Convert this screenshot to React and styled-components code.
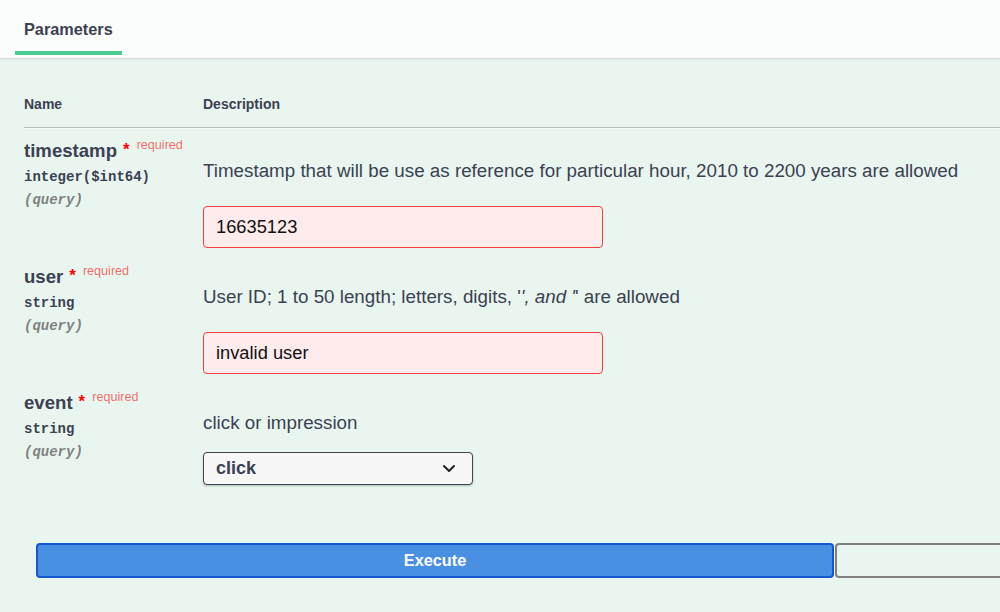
import React from 'react';
import styled, { createGlobalStyle } from 'styled-components';

const Global = createGlobalStyle`
  html, body {
    margin: 0;
    padding: 0;
    background: #e9f6f0;
  }
  body {
    font-family: "Liberation Sans", Arial, sans-serif;
    color: #3b4151;
  }
`;

const params = [
  {
    name: 'timestamp',
    type: 'integer($int64)',
    desc: 'Timestamp that will be use as reference for particular hour, 2010 to 2200 years are allowed',
    value: '16635123',
  },
  {
    name: 'user',
    type: 'string',
    desc: (
      <>
        User ID; 1 to 50 length; letters, digits, '<em>', and '</em>' are allowed
      </>
    ),
    value: 'invalid user',
  },
  {
    name: 'event',
    type: 'string',
    desc: 'click or impression',
    select: 'click',
  },
];

export default function App() {
  return (
    <Page>
      <Global />
      <Header>
        <Tab>Parameters</Tab>
      </Header>
      <Table>
        <HeadRow>
          <HeadCell>Name</HeadCell>
          <HeadCell>Description</HeadCell>
        </HeadRow>
        {params.map((p) => (
          <Row key={p.name}>
            <NameCol>
              <ParamName>
                {p.name}
                <Star>*</Star>
                <Required>required</Required>
              </ParamName>
              <ParamType>{p.type}</ParamType>
              <ParamIn>(query)</ParamIn>
            </NameCol>
            <DescCol>
              <Desc>{p.desc}</Desc>
              {p.select ? (
                <Select>
                  <span>{p.select}</span>
                  <svg width="14" height="9" viewBox="0 0 14 9">
                    <path d="M2 2l5 5 5-5" fill="none" stroke="#222" strokeWidth="2" strokeLinecap="round" strokeLinejoin="round" />
                  </svg>
                </Select>
              ) : (
                <Input>{p.value}</Input>
              )}
            </DescCol>
          </Row>
        ))}
      </Table>
      <ButtonGroup>
        <ExecuteButton>Execute</ExecuteButton>
        <ClearButton />
      </ButtonGroup>
    </Page>
  );
}

const Page = styled.div`
  width: 1000px;
  height: 612px;
  overflow: hidden;
  background: #e9f6f0;
`;

const Header = styled.div`
  height: 58px;
  background: #fbfdfc;
  box-shadow: 0 1px 2px rgba(0, 0, 0, 0.12);
  display: flex;
  align-items: flex-start;
  padding-left: 15px;
  position: relative;
`;

const Tab = styled.div`
  display: flex;
  align-items: center;
  padding: 8px 9px 0;
  width: 107px;
  box-sizing: border-box;
  font-size: 16.3px;
  font-weight: 700;
  color: #3b4151;
  border-bottom: 4px solid #49cc90;
  height: 55px;
`;

const Table = styled.div`
  padding-left: 24px;
  margin-top: 38px;
`;

const HeadRow = styled.div`
  display: grid;
  grid-template-columns: 179px 1fr;
  padding-bottom: 14px;
  border-bottom: 1px solid #aebdb6;
  box-shadow: 0 1px 0 #f3fbf7;
`;

const HeadCell = styled.div`
  font-size: 14px;
  font-weight: 700;
  line-height: 17px;
`;

const Row = styled.div`
  display: grid;
  grid-template-columns: 179px 1fr;
  height: 126px;
  padding-top: 12px;
  box-sizing: border-box;
`;

const NameCol = styled.div`
  display: flex;
  flex-direction: column;
`;

const ParamName = styled.div`
  font-size: 18.6px;
  font-weight: 700;
  line-height: 22px;
  white-space: nowrap;
`;

const Star = styled.span`
  color: #f00;
  font-size: 17px;
  margin-left: 6px;
  position: relative;
  top: -2px;
`;

const Required = styled.span`
  color: rgba(255, 0, 0, 0.6);
  font-size: 12.6px;
  font-weight: 400;
  position: relative;
  top: -8px;
  margin-left: 7px;
`;

const ParamType = styled.div`
  font-family: "Liberation Mono", "Courier New", monospace;
  font-size: 14px;
  font-weight: 700;
  line-height: 18px;
  margin-top: 4px;
`;

const ParamIn = styled.div`
  font-family: "Liberation Mono", "Courier New", monospace;
  font-size: 14px;
  font-weight: 700;
  font-style: italic;
  color: #808080;
  line-height: 18px;
  margin-top: 5px;
`;

const DescCol = styled.div`
  display: flex;
  flex-direction: column;
  align-items: flex-start;
  padding-top: 20px;
`;

const Desc = styled.div`
  font-size: 18.8px;
  line-height: 22px;
  white-space: nowrap;
`;

const Input = styled.div`
  margin-top: 24px;
  width: 400px;
  height: 42px;
  box-sizing: border-box;
  border: 1px solid #f93e3e;
  border-radius: 4px;
  background: #feebeb;
  padding: 0 12px;
  display: flex;
  align-items: center;
  font-size: 18.3px;
  color: #111;
`;

const Select = styled.div`
  margin-top: 18px;
  width: 270px;
  height: 33px;
  box-sizing: border-box;
  border: 1.5px solid #41444e;
  border-radius: 4px;
  background: #f7f7f7;
  box-shadow: 0 1px 2px rgba(0, 0, 0, 0.25);
  padding: 0 16px 0 12px;
  display: flex;
  align-items: center;
  justify-content: space-between;
  font-size: 18px;
  font-weight: 700;
  color: #3b4151;
`;

const ButtonGroup = styled.div`
  display: flex;
  padding-left: 36px;
  margin-top: 37px;
`;

const ExecuteButton = styled.button`
  flex: 0 0 798px;
  height: 35px;
  background: #4990e2;
  border: 2px solid #1258cf;
  border-radius: 4px;
  color: #fff;
  font-family: "Liberation Sans", Arial, sans-serif;
  font-size: 16.3px;
  font-weight: 700;
  cursor: pointer;
`;

const ClearButton = styled.button`
  flex: 0 0 300px;
  height: 35px;
  margin-left: 1px;
  background: transparent;
  border: 2px solid #808080;
  border-radius: 4px 0 0 4px;
`;
